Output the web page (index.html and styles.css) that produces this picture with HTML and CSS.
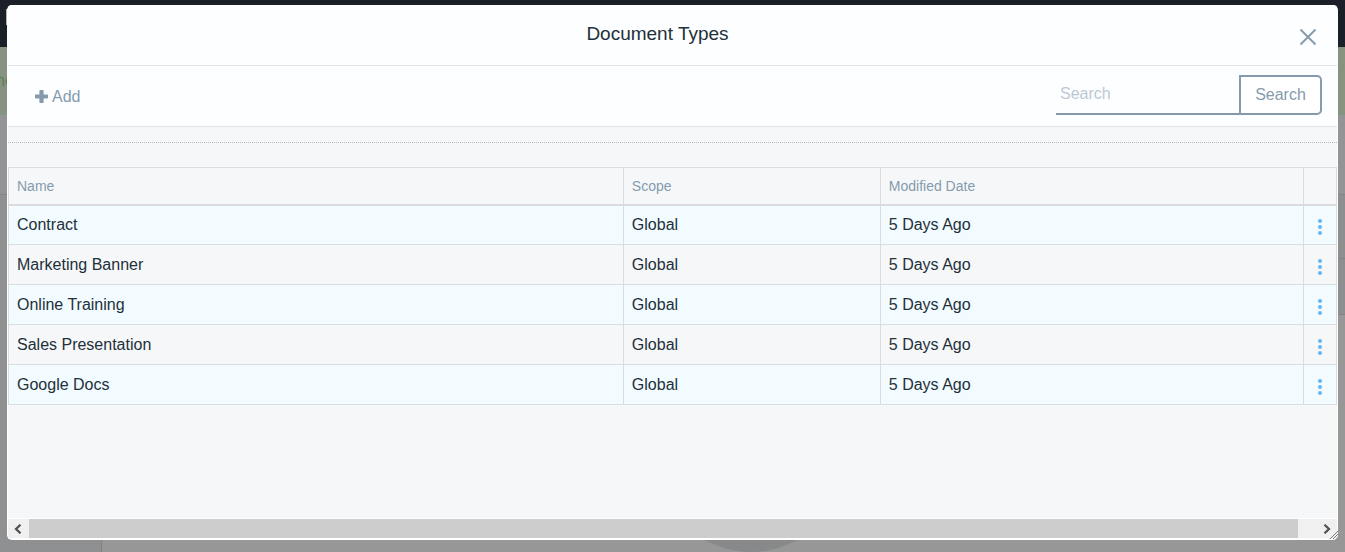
FILE: index.html
```html
<!DOCTYPE html>
<html lang="en">
<head>
<meta charset="utf-8">
<title>Document Types</title>
<link rel="stylesheet" href="styles.css">
</head>
<body>
<div class="page" aria-hidden="true">
  <div class="page-nav"><span class="page-logo"></span></div>
  <div class="page-banner"><span>ne</span></div>
  <div class="page-strip"></div>
  <div class="page-body">
    <div class="page-side"></div>
    <div class="page-main"></div>
    <div class="page-edge"><span></span><span></span></div>
    <div class="page-circle"></div>
  </div>
</div>
<section class="modal" role="dialog" aria-labelledby="title">
  <header class="modal-header">
    <h1 id="title">Document Types</h1>
    <button class="close" type="button" aria-label="Close">
      <svg width="18" height="18" viewBox="0 0 18 18"><path d="M1.5 1.5l15 15M16.5 1.5l-15 15" fill="none" stroke="currentColor" stroke-width="1.9"/></svg>
    </button>
  </header>
  <div class="toolbar">
    <button class="add" type="button">
      <svg width="13" height="13" viewBox="0 0 13 13"><path d="M5.2 0h2.6q.8 0 .8.8v3.6h3.6q.8 0 .8.8v2.6q0 .8-.8.8H8.6v3.6q0 .8-.8.8H5.2q-.8 0-.8-.8V8.6H.8q-.8 0-.8-.8V5.2q0-.8.8-.8h3.6V.8q0-.8.8-.8z" fill="currentColor"/></svg>
      <span>Add</span>
    </button>
    <form class="search">
      <input type="text" placeholder="Search" aria-label="Search">
      <button type="button">Search</button>
    </form>
  </div>
  <div class="content">
    <table class="types">
      <colgroup><col class="c-name"><col class="c-scope"><col class="c-date"><col class="c-menu"></colgroup>
      <thead>
        <tr><th>Name</th><th>Scope</th><th>Modified Date</th><th></th></tr>
      </thead>
      <tbody>
        <tr><td>Contract</td><td>Global</td><td>5 Days Ago</td><td><button class="more" type="button" aria-label="Contract actions"><i></i><i></i><i></i></button></td></tr>
        <tr><td>Marketing Banner</td><td>Global</td><td>5 Days Ago</td><td><button class="more" type="button" aria-label="Marketing Banner actions"><i></i><i></i><i></i></button></td></tr>
        <tr><td>Online Training</td><td>Global</td><td>5 Days Ago</td><td><button class="more" type="button" aria-label="Online Training actions"><i></i><i></i><i></i></button></td></tr>
        <tr><td>Sales Presentation</td><td>Global</td><td>5 Days Ago</td><td><button class="more" type="button" aria-label="Sales Presentation actions"><i></i><i></i><i></i></button></td></tr>
        <tr><td>Google Docs</td><td>Global</td><td>5 Days Ago</td><td><button class="more" type="button" aria-label="Google Docs actions"><i></i><i></i><i></i></button></td></tr>
      </tbody>
    </table>
  </div>
  <div class="scrollbar">
    <button type="button" aria-label="Scroll left"><svg width="8" height="10" viewBox="0 0 8 10"><path d="M6.500 .7L2 5l4.500 4.300" fill="none" stroke="currentColor" stroke-width="2.2"/></svg></button>
    <div class="thumb"></div>
    <button class="right" type="button" aria-label="Scroll right"><svg width="8" height="10" viewBox="0 0 8 10"><path d="M1.500 .7L6 5l-4.500 4.300" fill="none" stroke="currentColor" stroke-width="2.2"/></svg></button>
  </div>
  <svg class="grip" width="8" height="8" viewBox="0 0 8 8"><path d="M0 8l8-8M3 8l5-5M6 8l2-2" stroke="#777" stroke-width="1"/></svg>
</section>
</body>
</html>
```
FILE: styles.css
```css
* { box-sizing: border-box; }
html, body { height: 100%; }
body {
  margin: 0;
  overflow: hidden;
  font-family: "Liberation Sans", Arial, sans-serif;
  font-size: 16px;
  color: #22303a;
}
button {
  font: inherit;
  color: inherit;
  background: none;
  border: 0;
  padding: 0;
  cursor: pointer;
}
svg { display: block; }

.page { display: flex; flex-direction: column; height: 100%; }
.page-nav { height: 47px; padding: 9px 6px; background: #1a1f28; }
.page-logo { display: block; width: 10px; height: 16px; background: #b5b2ae; }
.page-banner {
  display: flex;
  align-items: center;
  height: 68px;
  background: #869381;
  color: #5a8055;
}
.page-banner span { margin-left: -4px; }
.page-strip { height: 80px; background: #939496; border-bottom: 1px solid #858688; }
.page-body { position: relative; flex: 1; display: flex; overflow: hidden; background: #979797; }
.page-side { width: 102px; background: #8f9092; border-right: 1px solid #828282; }
.page-main { flex: 1; }
.page-edge { width: 7px; background: #8d8e90; height: 120px; }
.page-edge span { display: block; height: 64px; border-bottom: 1px solid #838486; }
.page-edge span + span { height: 56px; }
.page-circle {
  position: absolute;
  left: 50%;
  bottom: 0;
  width: 188px;
  height: 188px;
  margin-left: -16px;
  border-radius: 50%;
  background: #87898b;
}

.modal {
  position: fixed;
  inset: 5px 7px 12px;
  display: flex;
  flex-direction: column;
  padding: 0 1px 1px;
  border-radius: 5px;
  overflow: hidden;
  background: #fff;
}
.modal-header {
  position: relative;
  height: 61px;
  padding-bottom: 2px;
  display: flex;
  align-items: center;
  justify-content: center;
  background: #fdfeff;
  border-bottom: 1px solid #e1e4e8;
}
h1 { margin: 0; padding-right: 30px; font-size: 19px; line-height: 20px; font-weight: 400; }
.close { position: absolute; right: 20px; top: 23px; color: #859bad; }

.toolbar {
  height: 61px;
  padding: 0 15px 0 27px;
  display: flex;
  align-items: center;
  justify-content: space-between;
  background: #fdfeff;
  border-bottom: 1px solid #e1e4e8;
  color: #859bad;
}
.add { display: flex; align-items: center; gap: 4px; }
.add span { padding-top: 1px; }
.search { display: flex; height: 40px; margin-bottom: 2px; }
.search input {
  width: 183px;
  padding: 0 4px;
  border: 0;
  border-bottom: 2px solid #859bad;
  background: none;
  font: inherit;
  outline: none;
}
.search input::placeholder { color: #bcc9d4; opacity: 1; }
.search button {
  width: 83px;
  border: 2px solid #859bad;
  border-radius: 0 5px 5px 0;
  background: #fff;
}

.content {
  flex: 1;
  padding-top: 15px;
  background: #f6f7f9;
}
.content::before {
  content: "";
  display: block;
  margin-bottom: 24px;
  border-top: 1px dotted #b4b6b8;
}
.types { width: 100%; border-collapse: collapse; table-layout: fixed; }
.c-name { width: 46.300%; }
.c-scope { width: 19.350%; }
.c-menu { width: 33px; }
.types th, .types td {
  height: 40px;
  padding: 0 8px;
  border: 1px solid #dbdcde;
  text-align: left;
}
.types th {
  height: 37px;
  border-bottom-width: 2px;
  font-size: 14px;
  font-weight: 400;
  color: #859bad;
}
.types tbody tr:nth-child(odd) { background: #f2fbff; }
.types td:last-child { padding: 4px 0 0; }
.more { display: flex; flex-direction: column; gap: 2px; margin: 0 auto; }
.more i { width: 4px; height: 4px; border-radius: 50%; background: #66b5f0; }

.scrollbar {
  display: flex;
  height: 21px;
  border: solid #fff;
  border-width: 1px 0;
  background: #f0f0f0;
  color: #505050;
}
.scrollbar button { width: 21px; padding-right: 2px; display: flex; align-items: center; justify-content: center; }
.scrollbar .right { width: 21px; padding-right: 0; margin-left: 18px; }
.thumb { flex: 1; background: #cdcdcd; }
.grip { position: absolute; right: 0; bottom: 1px; }
```
